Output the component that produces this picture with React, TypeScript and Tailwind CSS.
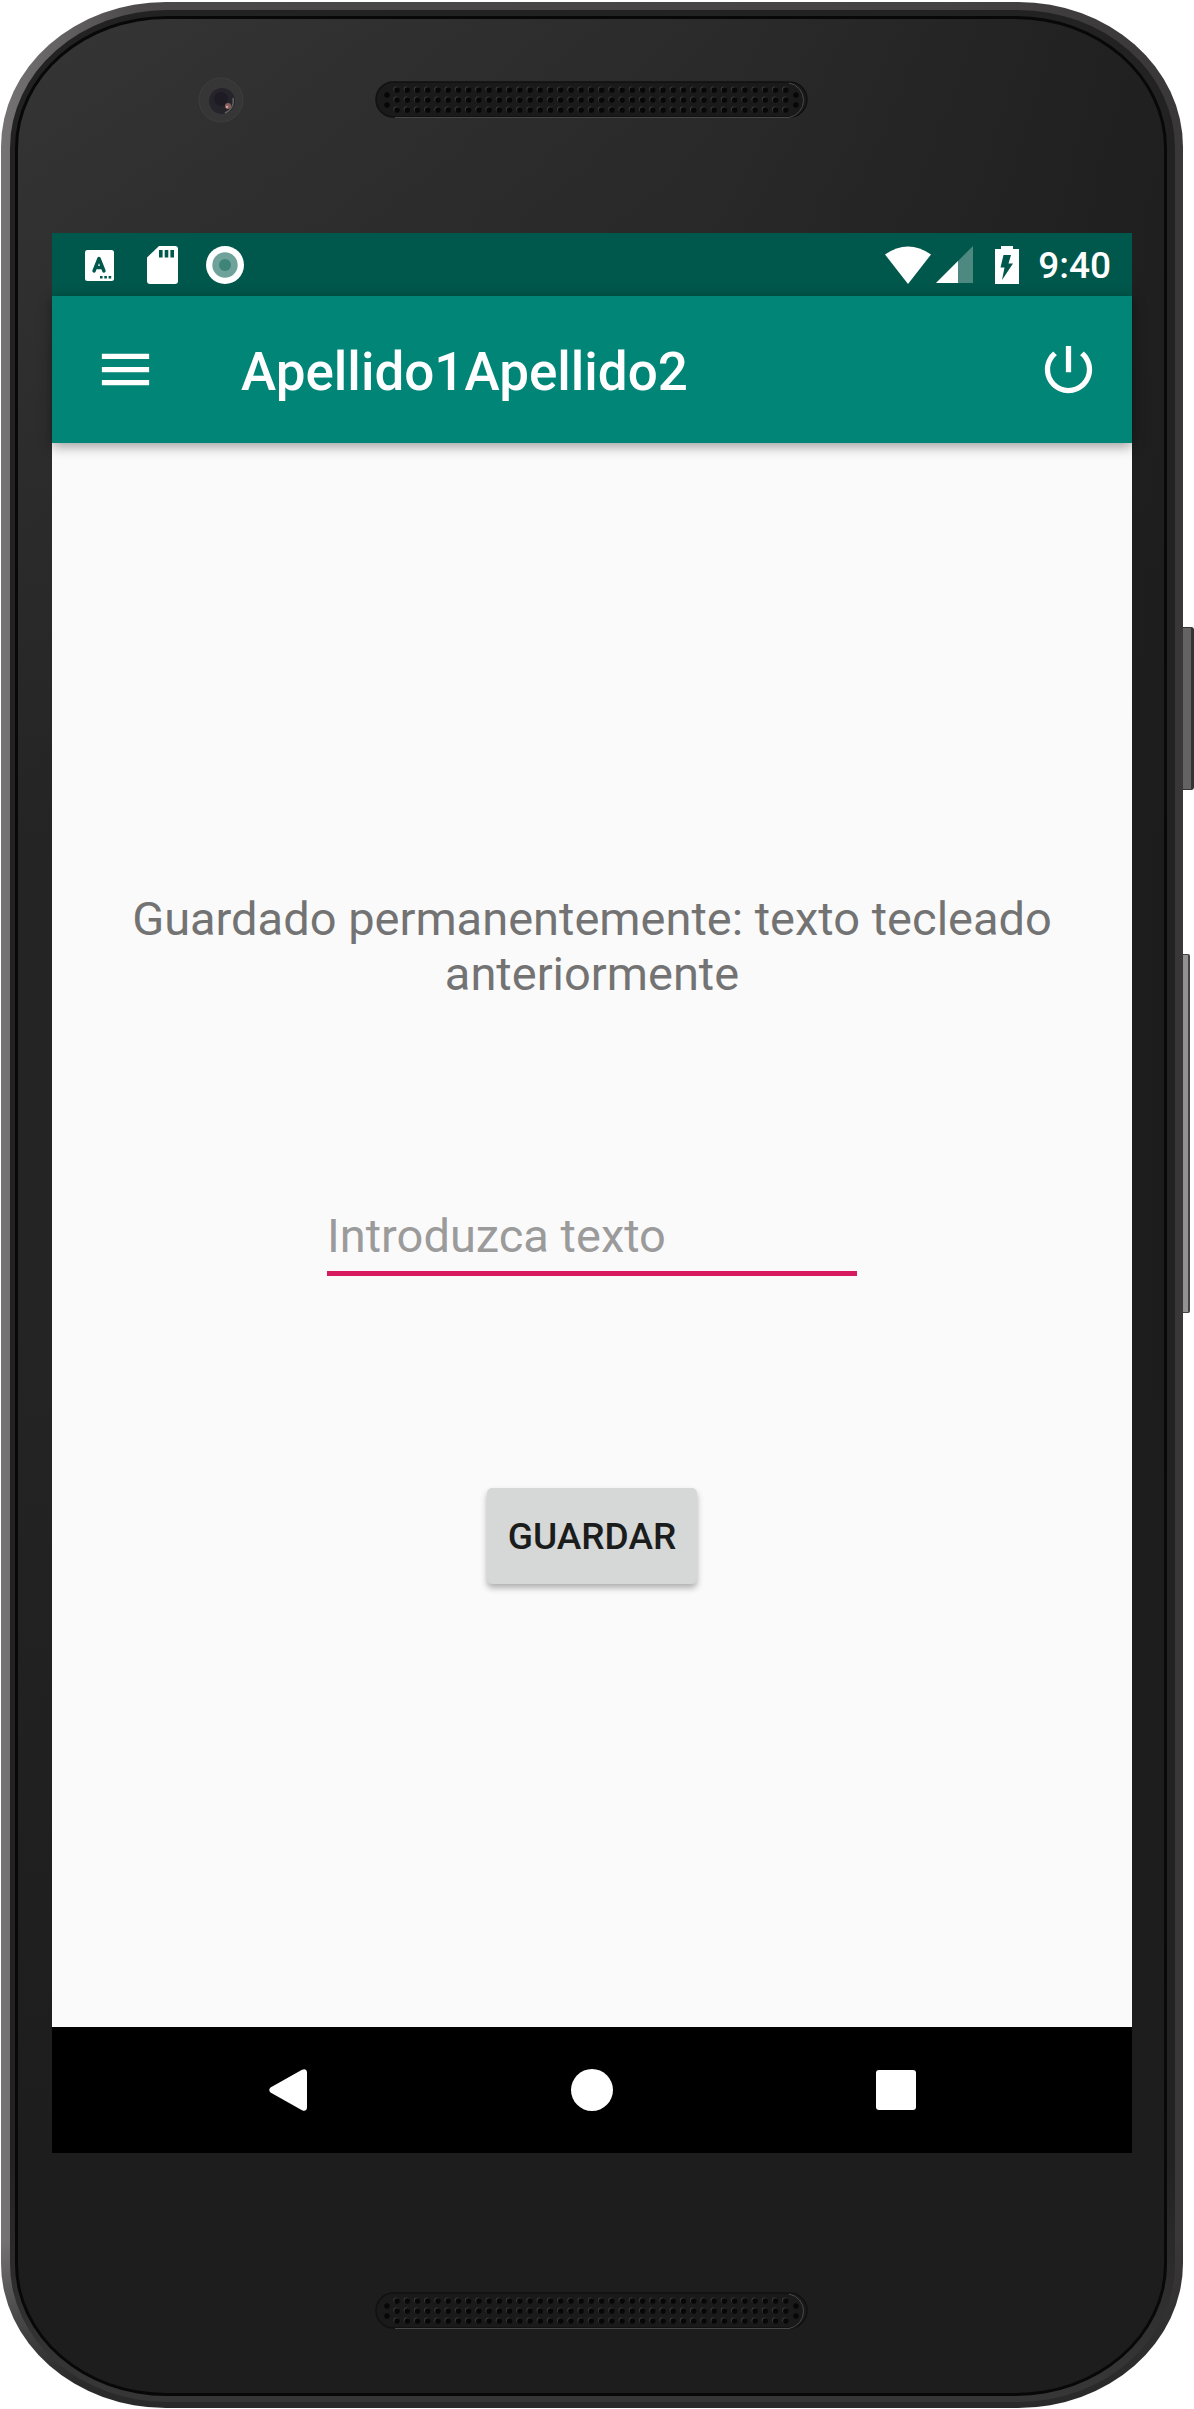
import { useState } from "react";

function SpeakerGrille() {
  const columns = Array.from({ length: 39 }, (_, i) => 22 + i * 10.23);
  return (
    <svg className="h-[38px] w-[436px]" viewBox="0 0 434 38" aria-hidden="true">
      <rect x="1" y="1" width="431" height="35" rx="17.5" fill="#1a1a1a" stroke="#111" strokeWidth="1.5" />
      <path d="M414 2 A17.5 17.5 0 0 1 414 36.5 H20" fill="none" stroke="#484848" strokeWidth="1" />
      {columns.map((x) =>
        [9, 19, 29].map((y) => (
          <g key={`${x}-${y}`}>
            <circle cx={x - 0.8} cy={y - 0.8} r="2.8" fill="#3a3a3a" />
            <circle cx={x} cy={y} r="2.7" fill="#070707" />
          </g>
        )),
      )}
      {[12, 421].map((x) =>
        [14, 24].map((y) => <circle key={`${x}-${y}`} cx={x} cy={y} r="2.7" fill="#070707" />),
      )}
    </svg>
  );
}

function Camera() {
  return (
    <svg className="h-[46px] w-[46px]" viewBox="0 0 46 46" aria-hidden="true">
      <circle cx="23" cy="23" r="22" fill="#363636" stroke="#3e3e3e" />
      <circle cx="24" cy="24" r="13" fill="#26242b" />
      <circle cx="23" cy="22" r="7" fill="#1e1b24" />
      <path d="M35 21 A13 13 0 0 1 27 36" fill="none" stroke="#62605f" strokeWidth="1.5" />
      <circle cx="30" cy="29" r="3" fill="#8a5f5f" />
      <circle cx="29" cy="30" r="1.2" fill="#d3a9a0" />
    </svg>
  );
}

function StatusBar() {
  return (
    <div className="flex h-[63px] items-center justify-between bg-[#00574b] pr-[21px] pl-[33px]">
      <div className="flex items-center" aria-hidden="true">
        <svg className="h-[38px] w-[29px]" viewBox="0 0 29 38">
          <rect x="0" y="4" width="29" height="31" rx="2.5" fill="#fff" />
          <path d="M9 25 L14 12.5 L19 25 M10.5 21.5 H17.5" fill="none" stroke="#00574b" strokeWidth="3.4" strokeLinecap="round" strokeLinejoin="round" />
          <path d="M15 30 h2.6 v2.6 h-2.6z M19.3 30 h2.6 v2.6 h-2.6z M23.6 30 h2.6 v2.6 h-2.6z" fill="#00574b" />
        </svg>
        <svg className="ml-[33px] h-[38px] w-[31px]" viewBox="0 0 31 38">
          <path d="M12 0 H28 Q31 0 31 3 V35 Q31 38 28 38 H3 Q0 38 0 35 V11.500 Z" fill="#fff" />
          <path d="M12 4 h3.600 v7.500 h-3.600z M17.700 4 h3.600 v7.500 h-3.600z M23.400 4 h3.600 v7.500 h-3.600z" fill="#00574b" />
        </svg>
        <svg className="ml-[28px] h-[38px] w-[38px]" viewBox="0 0 38 38">
          <circle cx="19" cy="19" r="19" fill="#fff" />
          <circle cx="19" cy="19" r="12.700" fill="#6fa29a" />
          <circle cx="19" cy="19" r="6" fill="#3f8478" />
        </svg>
      </div>
      <div className="flex items-center">
        <svg className="h-[38px] w-[46px]" viewBox="0 0 46 38" aria-hidden="true">
          <path d="M0 8.500 Q23 -7.500 46 8.500 L23 38 Z" fill="#fff" />
        </svg>
        <svg className="ml-[5px] h-[37px] w-[37px]" viewBox="0 0 37 37" aria-hidden="true">
          <path d="M0 37 L37 0 V37 Z" fill="#fff" fillOpacity="0.3" />
          <path d="M0 37 L22 15 V37 Z" fill="#fff" />
        </svg>
        <svg className="ml-[22px] h-[38px] w-[24px]" viewBox="0 0 24 38" aria-hidden="true">
          <path d="M6 0 H18 V3 H24 V38 H0 V3 H6 Z" fill="#fff" />
          <path d="M8.500 9 H16 L13.500 17.500 H18 L7 34 L9.500 21.500 H5.500 Z" fill="#00574b" />
        </svg>
        <time className="ml-[19px] pt-[2px] text-[37px] leading-[44px] font-medium text-white">9:40</time>
      </div>
    </div>
  );
}

function AppBar() {
  return (
    <header className="relative flex h-[147px] items-center bg-[#008577] pr-[32px] pl-[42px] shadow-[0_3px_12px_rgba(0,0,0,0.4)]">
      <button type="button" aria-label="Menú" className="shrink-0">
        <svg className="h-[63px] w-[63px]" viewBox="0 0 24 24" fill="#fff">
          <path d="M3 18h18v-2H3v2zm0-5h18v-2H3v2zm0-7v2h18V6H3z" />
        </svg>
      </button>
      <h1 className="ml-[84px] flex-1 pt-1 text-[53px] leading-[62px] font-medium text-white">Apellido1Apellido2</h1>
      <button type="button" aria-label="Apagar" className="shrink-0">
        <svg className="h-[63px] w-[63px]" viewBox="0 0 24 24" fill="#fff">
          <path d="M13 3h-2v10h2V3zm4.830 2.170l-1.420 1.420C17.990 7.860 19 9.810 19 12c0 3.870-3.130 7-7 7s-7-3.130-7-7c0-2.190 1.010-4.140 2.580-5.420L6.170 5.170C4.230 6.820 3 9.260 3 12c0 4.970 4.030 9 9 9s9-4.030 9-9c0-2.740-1.230-5.180-3.170-6.830z" />
        </svg>
      </button>
    </header>
  );
}

function SaveForm() {
  const [text, setText] = useState("");
  return (
    <main className="flex flex-col items-center bg-[#fafafa] px-[63px] pt-[448px] pb-[443px]">
      <p className="text-center text-[47px] leading-[55px] text-[#737373]">
        Guardado permanentemente: texto tecleado anteriormente
      </p>
      <form className="mt-[203px] flex w-full flex-col items-center" onSubmit={(e) => e.preventDefault()}>
        <input
          type="text"
          aria-label="Introduzca texto"
          placeholder="Introduzca texto"
          value={text}
          onChange={(e) => setText(e.target.value)}
          className="h-[72px] w-full max-w-[530px] border-b-[5px] border-[#d81b60] bg-transparent pb-1 text-[47px] leading-[55px] text-[#212121] outline-none placeholder:text-[#9b9b9b]"
        />
        <button
          type="submit"
          className="mt-[212px] h-[96px] rounded-[5px] bg-[#d6d7d7] px-[21px] pt-[2px] text-[37px] leading-[44px] font-medium text-[#1b1c1c] shadow-[0_4px_6px_rgba(0,0,0,0.3)]"
        >
          GUARDAR
        </button>
      </form>
    </main>
  );
}

function NavigationBar() {
  return (
    <nav className="flex h-[126px] items-center justify-center bg-black">
      <button type="button" aria-label="Atrás" className="flex h-full w-[304px] items-center justify-center">
        <svg className="h-[42px] w-[38px]" viewBox="0 0 38 42" fill="#fff">
          <path d="M1.500 18.500 L33 0.800 Q37.500 -1 38 3 V39 Q37.500 43 33 41.200 L1.500 23.500 Q-1 21 1.500 18.500 Z" />
        </svg>
      </button>
      <button type="button" aria-label="Inicio" className="flex h-full w-[304px] items-center justify-center">
        <span className="h-[42px] w-[42px] rounded-full bg-white" />
      </button>
      <button type="button" aria-label="Recientes" className="flex h-full w-[304px] items-center justify-center">
        <span className="h-[40px] w-[40px] rounded-[3px] bg-white" />
      </button>
    </nav>
  );
}

export default function App() {
  return (
    <div className="flex bg-white pt-[2px] pb-px pl-px font-[Roboto,sans-serif]">
      <div className="min-w-0 flex-1 rounded-[165px/145px] bg-[linear-gradient(to_bottom,transparent_93%,#2a2a2a_99%),linear-gradient(to_right,#757374_0,#4a4849_12%,#444243_80%,#3a3738_100%)] pt-[8px] pr-[8px] pb-[6px] pl-[9px]">
        <div className="rounded-[157px/138px] bg-[linear-gradient(to_bottom,#222_90%,#363636_99%)] pt-[6px] pr-[8px] pb-[6px] pl-[5px]">
          <div className="rounded-[152px/132px] bg-[#080808] p-[3px]">
            <div className="rounded-[149px/129px] bg-[linear-gradient(to_bottom,transparent,#1a1a1aa0_35%,#1a1a1aa0_55%,#1d1d1d_90%),linear-gradient(to_right,#353536,#2b2b2b_60%,#202020)] pr-[32px] pl-[34px]">
              <div className="grid h-[214px] grid-cols-[1fr_auto_1fr] content-start items-center pt-[58px]">
                <div className="pl-[146px]">
                  <Camera />
                </div>
                <SpeakerGrille />
              </div>
              <div>
                <StatusBar />
                <AppBar />
                <SaveForm />
                <NavigationBar />
              </div>
              <div className="flex h-[240px] justify-center pt-[139px]">
                <SpeakerGrille />
              </div>
            </div>
          </div>
        </div>
      </div>
      <div className="w-[11px] shrink-0 pt-[625px]" aria-hidden="true">
        <div className="h-[163px] rounded-r-[3px] border-y border-r-[3px] border-[#333] bg-[#636363]" />
        <div className="mt-[164px] h-[359px] w-[7px] rounded-r-[2px] border-y border-r-2 border-[#444] bg-[#929292]" />
      </div>
    </div>
  );
}
